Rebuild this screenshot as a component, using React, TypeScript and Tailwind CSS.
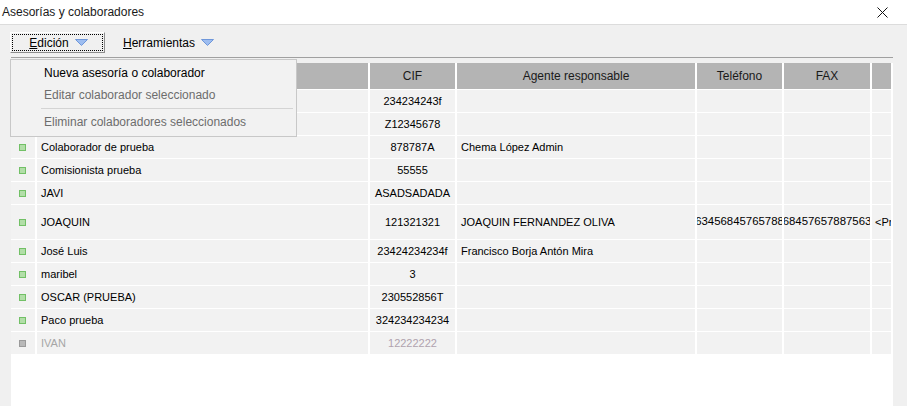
import React from "react";

type Row = {
  name: string;
  cif: string;
  agente?: string;
  tel?: string;
  fax?: string;
  extra?: string;
  tall?: boolean;
  off?: boolean;
};

const rows: Row[] = [
  { name: "Asesoría Central", cif: "234234243f" },
  { name: "Colaborador externo", cif: "Z12345678" },
  { name: "Colaborador de prueba", cif: "878787A", agente: "Chema López Admin" },
  { name: "Comisionista prueba", cif: "55555" },
  { name: "JAVI", cif: "ASADSADADA" },
  {
    name: "JOAQUIN",
    cif: "121321321",
    agente: "JOAQUIN FERNANDEZ OLIVA",
    tel: "63456845765788",
    fax: "68457657887563",
    extra: "<Predeterminado>",
    tall: true,
  },
  { name: "José Luis", cif: "23424234234f", agente: "Francisco Borja Antón Mira" },
  { name: "maribel", cif: "3" },
  { name: "OSCAR (PRUEBA)", cif: "230552856T" },
  { name: "Paco prueba", cif: "324234234234" },
  { name: "IVAN", cif: "12222222", off: true },
];

const Arrow = () => (
  <svg width="13" height="7" viewBox="0 0 13 7" className="ml-[6px]">
    <path d="M0.5 0.5 H12.5 L6.5 6.5 Z" fill="#9dbdf0" stroke="#6f97da" strokeWidth="1" />
  </svg>
);

const cell = "border-r-2 border-b border-white h-full overflow-hidden flex items-center";
const cols = "grid grid-cols-[26px_333px_87px_240px_87px_88px_21px]";

export default function App() {
  return (
    <div
      className="w-[907px] h-[406px] bg-[#f0f0f0] flex flex-col relative overflow-hidden text-black"
      style={{ fontFamily: '"Liberation Sans", Arial, sans-serif' }}
    >
      {/* title bar */}
      <div className="h-[25px] bg-white border-b border-[#dcdcdc] flex items-center justify-between pl-[2px] pr-[19px]">
        <span className="text-[12px] text-[#1a1a1a]">Asesorías y colaboradores</span>
        <svg width="11" height="11" viewBox="0 0 11 11">
          <path d="M0.5 0.5 L10.5 10.5 M10.5 0.5 L0.5 10.5" stroke="#111" strokeWidth="1" />
        </svg>
      </div>

      {/* toolbar */}
      <div className="h-[32px] flex items-center pl-[10px] pt-[3px]">
        <div className="w-[95px] h-[21px] border border-t-white border-l-white border-r-[#8c8c8c] border-b-[#8c8c8c] p-[1px]">
          <div className="h-full border border-dotted border-black flex items-center justify-center text-[12px] pl-[2px]">
            <span>
              <span className="underline">E</span>dición
            </span>
            <Arrow />
          </div>
        </div>
        <div className="flex items-center text-[12px] ml-[18px]">
          <span>
            <span className="underline">H</span>erramientas
          </span>
          <Arrow />
        </div>
      </div>

      {/* table */}
      <div className="flex-1 ml-[11px] w-[882px] border-t border-[#a0a0a0] pt-[5px] flex flex-col">
        <div className="flex-1 bg-white">
          <div className={`${cols} h-[27px] text-[12px] text-[#1a1a1a] bg-[#b4b4b4]`}>
            <div className={cell} />
            <div className={cell} />
            <div className={`${cell} justify-center`}>CIF</div>
            <div className={`${cell} justify-center`}>Agente responsable</div>
            <div className={`${cell} justify-center`}>Teléfono</div>
            <div className={`${cell} justify-center`}>FAX</div>
            <div className={`${cell} border-r-0`} />
          </div>
          {rows.map((r, i) => (
            <div
              key={i}
              className={`${cols} text-[11px] bg-[#f2f2f2] ${r.tall ? "h-[35px]" : "h-[23px]"} ${
                r.off ? "text-[#a6a6a6]" : "text-black"
              }`}
            >
              <div className={`${cell} pl-[8px]`}>
                <div
                  className={`w-[7px] h-[7px] border ${
                    r.off ? "bg-[#b8b8b8] border-[#9a9a9a]" : "bg-[#b2dea8] border-[#72c066]"
                  }`}
                />
              </div>
              <div className={`${cell} pl-[4px] whitespace-nowrap`}>{r.name}</div>
              <div className={`${cell} justify-center whitespace-nowrap ${r.off ? "text-[#b0a2ae]" : ""}`}>
                {r.cif}
              </div>
              <div className={`${cell} pl-[4px] whitespace-nowrap`}>{r.agente}</div>
              <div className={`${cell} justify-center whitespace-nowrap text-[11.4px]`}>
                <span className="shrink-0">{r.tel}</span>
              </div>
              <div className={`${cell} justify-center whitespace-nowrap text-[11.4px]`}>
                <span className="shrink-0">{r.fax}</span>
              </div>
              <div className={`${cell} border-r-0 pl-[3px] whitespace-nowrap`}>
                <span className="shrink-0">{r.extra}</span>
              </div>
            </div>
          ))}
        </div>
      </div>

      {/* Edición dropdown menu */}
      <div className="absolute left-[10px] top-[59px] w-[287px] h-[78px] bg-[#f2f2f2] border border-[#c8c8c8] pt-[2px] text-[12px]">
        <div className="h-[22px] flex items-center pl-[33px] text-black">Nueva asesoría o colaborador</div>
        <div className="h-[22px] flex items-center pl-[33px] text-[#6d6d6d]">Editar colaborador seleccionado</div>
        <div className="ml-[30px] mr-[3px] my-[2px] border-t border-[#d4d4d4]" />
        <div className="h-[22px] flex items-center pl-[33px] text-[#6d6d6d]">Eliminar colaboradores seleccionados</div>
      </div>
    </div>
  );
}
